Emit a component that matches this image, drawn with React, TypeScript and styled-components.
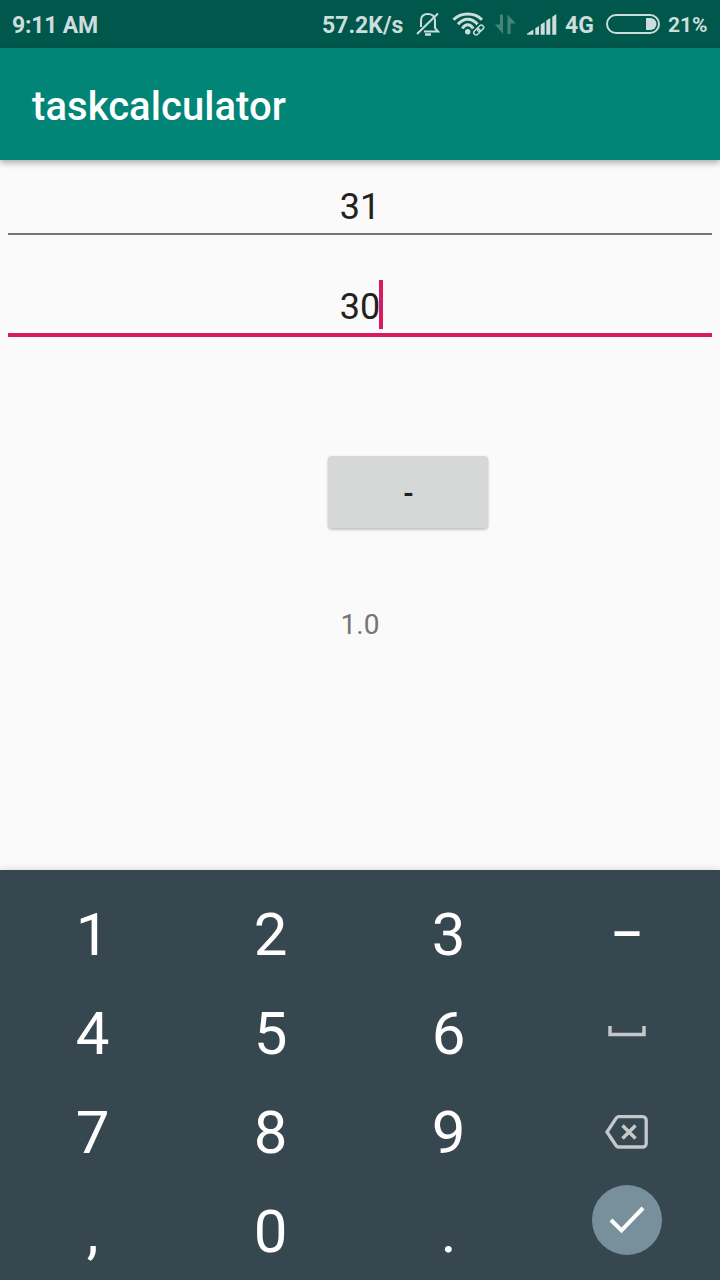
import React from 'react';
import styled, { createGlobalStyle } from 'styled-components';

const Global = createGlobalStyle`
  *, *::before, *::after { box-sizing: border-box; }
  body { margin: 0; font-family: Roboto, "Liberation Sans", sans-serif; }
`;

const Screen = styled.div`
  width: 720px;
  height: 1280px;
  display: flex;
  flex-direction: column;
  overflow: hidden;
  background: #fafafa;
`;

const StatusBar = styled.div`
  flex: none;
  height: 48px;
  padding: 4px 12px 0;
  display: flex;
  align-items: center;
  justify-content: space-between;
  background: #00574b;
  color: #ccdddb;
  font-size: 23px;
  font-weight: 700;
  line-height: 46px;
  white-space: nowrap;
`;

const StatusGroup = styled.div`
  display: flex;
  align-items: center;
`;

const Clock = styled.span`
  letter-spacing: -0.2px;
`;

const StatusText = styled.span<{ $width: number }>`
  width: ${(p) => p.$width}px;
`;

const BatteryText = styled(StatusText)`
  margin-top: -2px;
  font-size: 21px;
`;

const StatusIcon = styled.svg<{ $gap: number }>`
  display: block;
  flex: none;
  margin: -4px ${(p) => p.$gap}px 0 0;
`;

const AppBar = styled.header`
  flex: none;
  position: relative;
  height: 112px;
  padding: 6px 32px 0;
  display: flex;
  align-items: center;
  background: #008577;
  color: #fff;
  box-shadow: 0 3px 6px rgba(0, 0, 0, 0.3);
`;

const Title = styled.h1`
  margin: 0;
  font-size: 40px;
  font-weight: 500;
  line-height: 48px;
  letter-spacing: 0.06px;
`;

const Content = styled.main`
  height: 710px;
  padding: 0 8px;
  display: flex;
  flex-direction: column;
  align-items: center;
`;

const Field = styled.div<{ $focused?: boolean }>`
  flex: none;
  width: 100%;
  height: ${(p) => (p.$focused ? 57 : 55)}px;
  margin-top: ${(p) => (p.$focused ? 45 : 20)}px;
  display: flex;
  justify-content: center;
  border-bottom: ${(p) => (p.$focused ? '4px solid #d81b60' : '2px solid #757575')};
  color: #212121;
  font-size: 36px;
  line-height: 55px;
`;

const Caret = styled.span`
  width: 4px;
  height: 49px;
  margin-right: -3px;
  margin-left: -1px;
  background: #d81b60;
`;

const OperatorButton = styled.button`
  flex: none;
  width: 160px;
  height: 72px;
  margin: 119px 0 0 96px;
  padding: 2px 0 0 1px;
  border: 0;
  border-radius: 4px;
  background: #d6d8d7;
  color: #212121;
  font: 700 28px/72px Roboto, "Liberation Sans", sans-serif;
  box-shadow: 0 2px 3px rgba(0, 0, 0, 0.2), 0 0 2px rgba(0, 0, 0, 0.1);
`;

const Result = styled.output`
  margin-top: 78px;
  color: #757575;
  font-size: 28px;
  line-height: 38px;
`;

const Keyboard = styled.div`
  position: relative;
  flex: none;
  height: 410px;
  padding: 15px 3px 0 3.5px;
  display: grid;
  grid-template-columns: repeat(4, 178.1px);
  grid-template-rows: repeat(4, 99px);
  background: #37474f;
  box-shadow: 0 0 8px rgba(0, 0, 0, 0.14);
`;

const Key = styled.div`
  display: flex;
  align-items: center;
  justify-content: center;
  color: #fff;
  font-size: 60px;
  line-height: 99px;
`;

const DashLabel = styled.span`
  margin-top: -1px;
  font-size: 50px;
  font-weight: 500;
`;

const KeyIcon = styled.svg<{ $lift: number }>`
  display: block;
  margin-bottom: ${(p) => p.$lift}px;
`;

const EnterCircle = styled.div`
  width: 70px;
  height: 70px;
  margin-bottom: 23px;
  display: flex;
  align-items: center;
  justify-content: center;
  border-radius: 50%;
  background: #78909c;
`;

const MutedBell = () => (
  <StatusIcon $gap={12} width="24" height="26" viewBox="0 0 24 26" fill="none" stroke="currentColor" strokeWidth="2">
    <path d="M5 16V9.500C5 5 8 3 11.800 3s7.200 2.200 7.200 6.500V17l3 3.500H8" />
    <path d="M1 23 22 2.500" />
    <path d="M9 23.500h6" strokeWidth="2.500" />
  </StatusIcon>
);

const Wifi = () => (
  <StatusIcon $gap={9} width="34" height="26" viewBox="0 0 34 26" fill="none" stroke="currentColor" strokeWidth="3">
    <path d="M1.500 8.800C9 1.200 22.500 1.200 30 8.800" />
    <path d="M6 13.300C11.500 6.500 20 6.500 25.500 13.300" />
    <path d="M10.300 17.500C13.500 12.500 18 12.500 21.200 17.500" />
    <circle cx="15.700" cy="20.800" r="2.700" fill="currentColor" stroke="none" />
    <g strokeWidth="1.500" transform="rotate(-45 26.700 19)">
      <rect x="20.700" y="16.700" width="7" height="4.600" rx="2.300" />
      <rect x="25.700" y="16.700" width="7" height="4.600" rx="2.300" />
    </g>
  </StatusIcon>
);

const DataArrows = () => (
  <StatusIcon $gap={11} width="21" height="20" viewBox="0 0 21 20" fill="#478379">
    <path d="M5 0.500h3V20L0 10.500h5z" />
    <path d="M12.500 0.500 20.800 9.500H15.500V20h-3z" />
  </StatusIcon>
);

const Signal = () => (
  <StatusIcon $gap={8} width="30" height="21" viewBox="0 0 30 21" fill="currentColor">
    <path d="M0 20.700V19.800L6.300 15.500V20.700z" />
    <path d="M8.300 14.300 12 12V20.700H8.300z" />
    <path d="M13.700 10.500 17.700 8V20.700h-4z" />
    <path d="M19.300 6.500 23.300 4V20.700h-4z" />
    <path d="M25.300 2.700 29.300 0V20.700h-4z" />
  </StatusIcon>
);

const Battery = () => (
  <StatusIcon $gap={8} width="54" height="20" viewBox="0 0 54 20">
    <rect x="1" y="1" width="52" height="18" rx="9" fill="none" stroke="currentColor" strokeWidth="2" />
    <path d="M40 4h4.500a6 6 0 0 1 0 12H40z" fill="currentColor" />
  </StatusIcon>
);

const SpaceIcon = () => (
  <KeyIcon $lift={6} width="40" height="12" viewBox="0 0 40 12" fill="none" stroke="#c3c8ca">
    <path d="M3 1v8.500h34V1" strokeWidth="3.500" />
  </KeyIcon>
);

const BackspaceIcon = () => (
  <KeyIcon $lift={2} width="44" height="36" viewBox="0 0 44 36" fill="none" stroke="#c3c8ca" strokeWidth="3.300">
    <path d="M13.500 2.700h24.200a3.500 3.500 0 0 1 3.500 3.500v23.300a3.500 3.500 0 0 1-3.500 3.500H13.500Q12 33 11 31.500L2 18l9-13.500q1-1.800 2.500-1.800z" />
    <path d="m17.500 11.500 13 13m0-13-13 13" strokeWidth="3.500" />
  </KeyIcon>
);

const CheckIcon = () => (
  <svg width="36" height="28" viewBox="0 0 36 28" fill="none" stroke="#fff" strokeWidth="4">
    <path d="M2 14 12.500 24.500 34 2" />
  </svg>
);

const keys: React.ReactNode[] = [
  '1', '2', '3', <DashLabel key="dash">–</DashLabel>,
  '4', '5', '6', <SpaceIcon key="space" />,
  '7', '8', '9', <BackspaceIcon key="backspace" />,
  ',', '0', '.', <EnterCircle key="enter"><CheckIcon /></EnterCircle>,
];

export default function App() {
  return (
    <>
      <Global />
      <Screen>
        <StatusBar>
          <Clock>9:11 AM</Clock>
          <StatusGroup>
            <StatusText $width={94}>57.2K/s</StatusText>
            <MutedBell />
            <Wifi />
            <DataArrows />
            <Signal />
            <StatusText $width={41}>4G</StatusText>
            <Battery />
            <BatteryText $width={40}>21%</BatteryText>
          </StatusGroup>
        </StatusBar>
        <AppBar>
          <Title>taskcalculator</Title>
        </AppBar>
        <Content>
          <Field>31</Field>
          <Field $focused>
            30
            <Caret />
          </Field>
          <OperatorButton>-</OperatorButton>
          <Result>1.0</Result>
        </Content>
        <Keyboard>
          {keys.map((label, index) => (
            <Key key={index}>{label}</Key>
          ))}
        </Keyboard>
      </Screen>
    </>
  );
}
